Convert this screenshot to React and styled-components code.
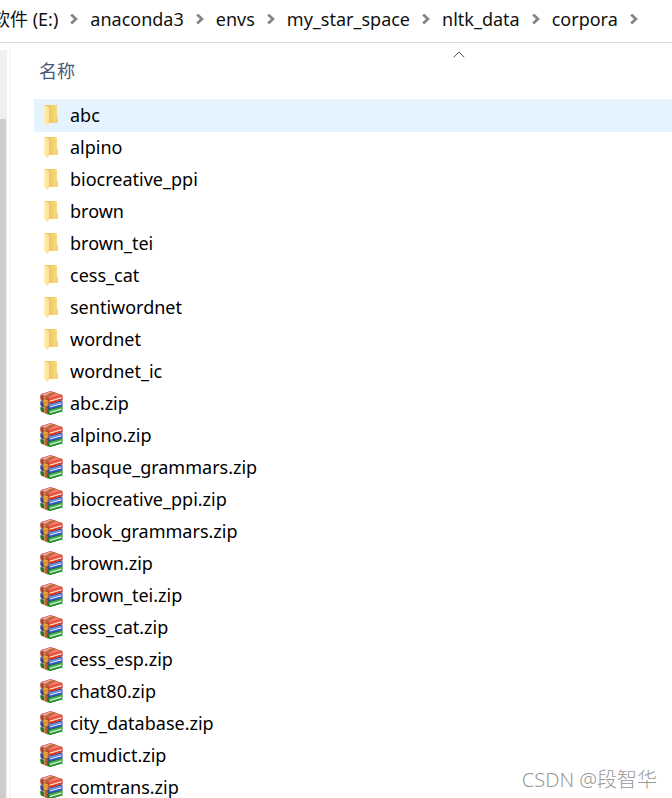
import { Fragment } from 'react';
import styled, { createGlobalStyle } from 'styled-components';

const GlobalStyle = createGlobalStyle`
  * {
    box-sizing: border-box;
  }

  body {
    margin: 0;
    background: #fff;
    color: #000;
    font-family: 'Noto Sans', 'Noto Sans CJK SC', sans-serif;
    font-size: 18px;
  }
`;

const Window = styled.div`
  position: relative;
  display: flex;
  flex-direction: column;
  height: 100vh;
  overflow: hidden;
`;

const AddressBar = styled.nav`
  display: flex;
  flex: none;
  align-items: center;
  gap: 12px;
  height: 43px;
  margin-left: -8px;
  padding-bottom: 4px;
  border-bottom: 1px solid #d9d9d9;
  white-space: nowrap;

  svg {
    flex: none;
  }
`;

const Crumb = styled.a`
  color: #111;
  line-height: 24px;
  text-decoration: none;
`;

const Content = styled.div`
  display: flex;
  flex: 1;
  min-height: 0;
`;

const ScrollTrack = styled.div`
  flex: none;
  width: 7px;
  margin-top: 7px;
  padding-top: 69px;
  background: #f0f0f0;
`;

const ScrollThumb = styled.div`
  width: 6px;
  height: 100%;
  background: #cdcdcd;
`;

const Divider = styled.div`
  flex: none;
  width: 2px;
  margin: 7px 23px 0 2px;
  background: #f7f7f7;
`;

const FilePane = styled.main`
  flex: 1;
  min-width: 0;
  overflow: hidden;
`;

// the name column is wider than the pane, the sort arrow sits in its middle
const ColumnHeader = styled.button`
  display: flex;
  flex-direction: column;
  align-items: flex-start;
  width: 850px;
  height: 56px;
  padding: 8px 5px 0;
  border: 0;
  background: none;
  color: #44597a;
  font: inherit;
  line-height: 24px;

  svg {
    align-self: center;
    margin-bottom: 1px;
  }
`;

const FileList = styled.ul`
  margin: 0;
  padding: 0;
  list-style: none;
`;

const FileRow = styled.li`
  display: flex;
  align-items: center;
  gap: 7px;
  height: 32px;
  padding-left: 5px;
  background: ${props => props.$selected ? '#e5f3ff' : 'transparent'};
  box-shadow: ${props => props.$selected ? '0 1px #e5f3ff' : 'none'};
  white-space: nowrap;

  svg {
    flex: none;
  }
`;

const Watermark = styled.div`
  position: absolute;
  right: 15px;
  bottom: 5px;
  color: #999;
  font-size: 20px;
  font-weight: 300;
  line-height: 26px;
`;

const path = ['软件 (E:)', 'anaconda3', 'envs', 'my_star_space', 'nltk_data', 'corpora'];

const folders = [
  'abc',
  'alpino',
  'biocreative_ppi',
  'brown',
  'brown_tei',
  'cess_cat',
  'sentiwordnet',
  'wordnet',
  'wordnet_ic',
];

const archives = [
  'abc.zip',
  'alpino.zip',
  'basque_grammars.zip',
  'biocreative_ppi.zip',
  'book_grammars.zip',
  'brown.zip',
  'brown_tei.zip',
  'cess_cat.zip',
  'cess_esp.zip',
  'chat80.zip',
  'city_database.zip',
  'cmudict.zip',
  'comtrans.zip',
];

function Chevron() {
  return (
    <svg width="8" height="10" viewBox="0 0 8 10" fill="none" stroke="#858585" strokeWidth="2.8" aria-hidden="true">
      <path d="M1.2 0.6 L5.9 5 L1.2 9.4" />
    </svg>
  );
}

function SortArrow() {
  return (
    <svg width="12" height="7" viewBox="0 0 12 7" fill="none" stroke="#555" aria-hidden="true">
      <path d="M0.7 6.3 L6 1 L11.3 6.3" />
    </svg>
  );
}

function FolderIcon() {
  return (
    <svg width="24" height="24" viewBox="0 0 24 24" aria-hidden="true">
      <defs>
        <linearGradient id="folderBack" x1="0" y1="0" x2="1" y2="0">
          <stop offset="0.2" stopColor="#e6c35d" />
          <stop offset="1" stopColor="#fbdd84" />
        </linearGradient>
        <linearGradient id="folderFlap" x1="0" y1="0" x2="1" y2="0">
          <stop offset="0" stopColor="#fff0bd" />
          <stop offset="1" stopColor="#ffe08c" />
        </linearGradient>
      </defs>
      <path d="M5.5 2 H18 V13.5 L19 14.5 V20 H8 Z" fill="url(#folderBack)" />
      <path d="M18 13.5 L19 14.5 V20 H17.5 V14 Z" fill="#f3d170" />
      <path d="M5 2 L10 4.3 V20.6 L8.8 22.8 L5 20.4 Z" fill="url(#folderFlap)" />
    </svg>
  );
}

// three strapped books: red, blue, green
function ArchiveIcon() {
  return (
    <svg width="24" height="24" viewBox="0 0 24 24" aria-hidden="true">
      <path d="M1.6 15.4 L8 18 L23.4 15 Q24 17.5 23 20.4 L10.5 24 L2 20.6 Q0.8 18 1.6 15.4 Z" fill="#24752a" />
      <path d="M10 19.3 L23.4 15.8 V17.4 L10.5 21 Z" fill="#46bb3d" />
      <path d="M10.6 21 L22.6 17.6 V19 L10.6 22.4 Z" fill="#e0eddb" />
      <path d="M10.4 22.4 L23.3 19 V20.4 L10.6 24 Z" fill="#1b9b2a" />

      <path d="M1.6 9.7 L8 12 L23.4 9.5 Q24 12 23.2 15 L10.5 18.5 L2 15.2 Q0.8 12.5 1.6 9.7 Z" fill="#35478d" />
      <path d="M10 13.6 L23.4 10.2 V11.8 L10.5 15.3 Z" fill="#6b91ee" />
      <path d="M10.6 15.4 L22.6 12 V13.4 L10.6 16.8 Z" fill="#dbe3f7" />
      <path d="M10.4 16.9 L23.3 13.5 V15 L10.6 18.5 Z" fill="#2e55c6" />

      <path d="M1.4 4.4 Q1.8 3.4 3 2.8 L10.5 0.4 Q11.5 0.1 12.6 0.4 L23.2 4 Q24 6.5 23.2 9.2 L10.5 12.8 L2 9.6 Q0.8 7 1.4 4.4 Z" fill="#b33f33" />
      <path d="M1.8 4 L10.5 0.4 Q11.5 0.1 12.6 0.4 L23.2 4 L10 7.6 Z" fill="#e56c5c" />
      <path d="M3.2 3.5 L11.5 0.8 L14 1.6 L6 4.8 Z" fill="#f2aaa0" />
      <path d="M14.5 3.8 L18 3 L20.8 3.9 L12 6.3 Z" fill="#f58474" />
      <path d="M10 7.5 L23.3 4 V5.8 L10.5 9.3 Z" fill="#f35235" />
      <path d="M10.6 9.4 L22.6 6.1 V7.5 L10.6 10.9 Z" fill="#f8dbd3" />
      <path d="M10.4 11 L23.3 7.6 V9.2 L10.6 12.8 Z" fill="#e13c24" />

      <path d="M14 0.9 L16.8 1.8 Q9.5 4.3 8.5 6.6 V23.1 L4.9 21.7 V6 Q6 3.8 14 0.9 Z" fill="#a95d2f" />
      <path d="M14 0.9 L15.2 1.3 Q7.5 4 6.4 6.4 V22 L4.9 21.4 V6 Q6 3.8 14 0.9 Z" fill="#d18b4c" />
      <path d="M5 9.3 L8.8 9.8 V14.2 L5 13.3 Z" fill="none" stroke="#e89826" strokeWidth="1.2" />
      <path d="M7 9 V15" stroke="#ffc943" />
    </svg>
  );
}

export default function App() {
  return (
    <Window>
      <GlobalStyle />
      <AddressBar aria-label="Path">
        {path.map(name => (
          <Fragment key={name}>
            <Crumb href="#">{name}</Crumb>
            <Chevron />
          </Fragment>
        ))}
      </AddressBar>
      <Content>
        <ScrollTrack>
          <ScrollThumb />
        </ScrollTrack>
        <Divider />
        <FilePane>
          <ColumnHeader type="button">
            <SortArrow />
            名称
          </ColumnHeader>
          <FileList>
            {folders.map((name, i) => (
              <FileRow key={name} $selected={i === 0}>
                <FolderIcon />
                {name}
              </FileRow>
            ))}
            {archives.map(name => (
              <FileRow key={name}>
                <ArchiveIcon />
                {name}
              </FileRow>
            ))}
          </FileList>
        </FilePane>
      </Content>
      <Watermark>CSDN @段智华</Watermark>
    </Window>
  );
}
